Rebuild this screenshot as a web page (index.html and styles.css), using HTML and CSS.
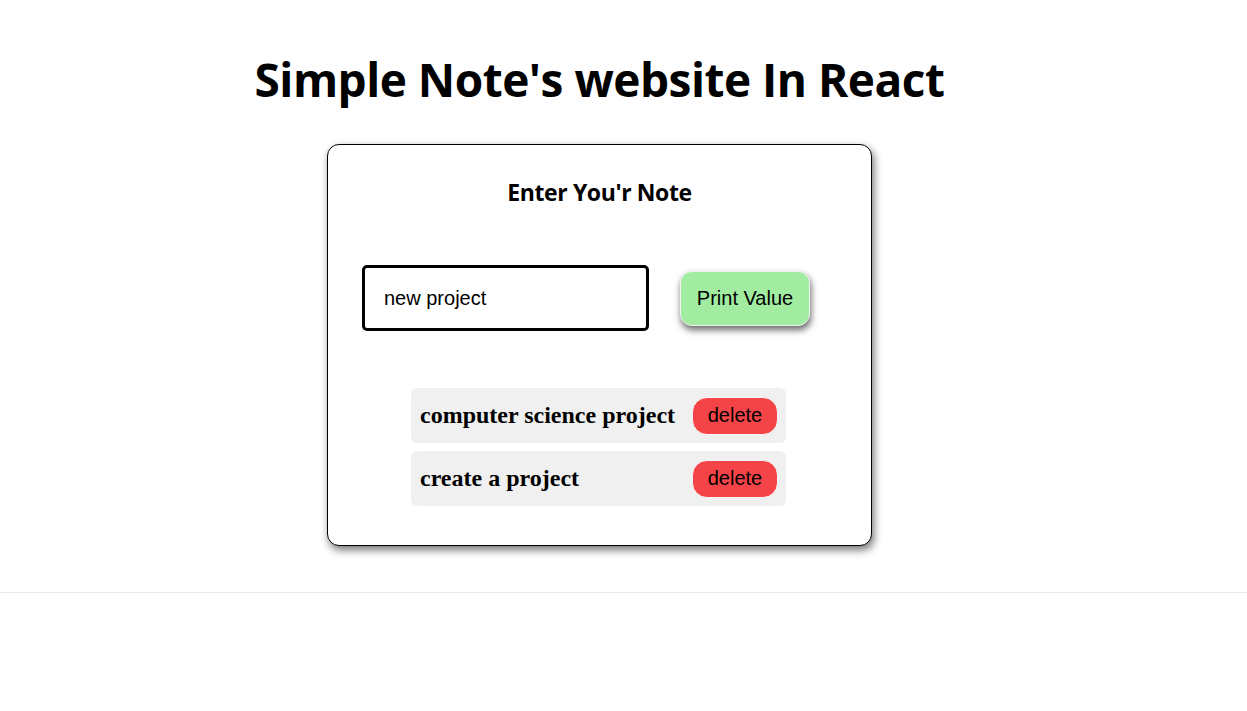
FILE: index.html
```html
<!DOCTYPE html>
<html lang="en">
<head>
<meta charset="utf-8">
<title>Simple Note's website In React</title>
<link rel="stylesheet" href="styles.css">
</head>
<body>
  <div class="app">
    <h1 class="title">Simple Note's website In React</h1>
    <div class="card">
      <h2 class="card-title">Enter You'r Note</h2>
      <div class="form-row">
        <input class="note-input" type="text" value="new project">
        <button class="print-btn">Print Value</button>
      </div>
      <div class="notes">
        <div class="note">
          <span class="note-text">computer science project</span>
          <button class="delete-btn">delete</button>
        </div>
        <div class="note">
          <span class="note-text">create a project</span>
          <button class="delete-btn">delete</button>
        </div>
      </div>
    </div>
  </div>
  <div class="divider"></div>
</body>
</html>
```

FILE: styles.css
```css
html, body {
  margin: 0;
  padding: 0;
  background: #ffffff;
}

.app {
  width: 1199px;
  display: flex;
  flex-direction: column;
  align-items: center;
  padding-bottom: 46px;
}

.title {
  margin: 47px 0 33px;
  font-family: "Open Sans", "Noto Sans", sans-serif;
  font-weight: 700;
  font-size: 46px;
  letter-spacing: -0.5px;
  line-height: 64px;
  color: #000;
}

.card {
  box-sizing: border-box;
  width: 545px;
  border: 1px solid #000;
  border-radius: 12px;
  box-shadow: 2px 4px 9px rgba(0, 0, 0, 0.55);
  background: #fff;
  display: flex;
  flex-direction: column;
  align-items: stretch;
  padding: 0 0 39px;
}

.card-title {
  margin: 31px 0 0;
  text-align: center;
  font-family: "Open Sans", "Noto Sans", sans-serif;
  font-weight: 700;
  font-size: 23px;
  letter-spacing: -0.4px;
  line-height: 32px;
  color: #000;
}

.form-row {
  margin-top: 57px;
  display: flex;
  align-items: center;
  gap: 31px;
  padding-left: 34px;
  height: 66px;
}

.note-input {
  box-sizing: border-box;
  width: 287px;
  height: 66px;
  border: 3px solid #000;
  border-radius: 5px;
  padding: 0 0 0 19px;
  font-family: "Liberation Sans", Arial, sans-serif;
  font-size: 20px;
  color: #000;
  background: #fff;
  outline: none;
}

.print-btn {
  box-sizing: border-box;
  width: 130px;
  height: 55px;
  border: 1px solid #f2f2f2;
  border-radius: 12px;
  background: #a1eca0;
  box-shadow: 1px 4px 7px rgba(0, 0, 0, 0.6);
  font-family: "Liberation Sans", Arial, sans-serif;
  font-size: 20px;
  color: #000;
  padding: 0;
}

.notes {
  margin-top: 57px;
  padding-right: 2px;
  display: flex;
  flex-direction: column;
  align-items: center;
  gap: 8px;
}

.note {
  box-sizing: border-box;
  width: 375px;
  height: 55px;
  background: #f0f0f0;
  border-radius: 6px;
  display: flex;
  align-items: center;
  justify-content: space-between;
  padding: 0 8px 0 9px;
}

.note-text {
  font-family: "Liberation Serif", "Times New Roman", serif;
  font-weight: 700;
  font-size: 24px;
  color: #000;
}

.delete-btn {
  box-sizing: border-box;
  flex: 0 0 86px;
  width: 86px;
  height: 38px;
  border: 1px solid #f6f6f6;
  border-radius: 15px;
  background: #f44447;
  font-family: "Liberation Sans", Arial, sans-serif;
  font-size: 20px;
  color: #000;
  padding: 0;
}

.divider {
  border-top: 1px solid #e8e8e8;
}
```
